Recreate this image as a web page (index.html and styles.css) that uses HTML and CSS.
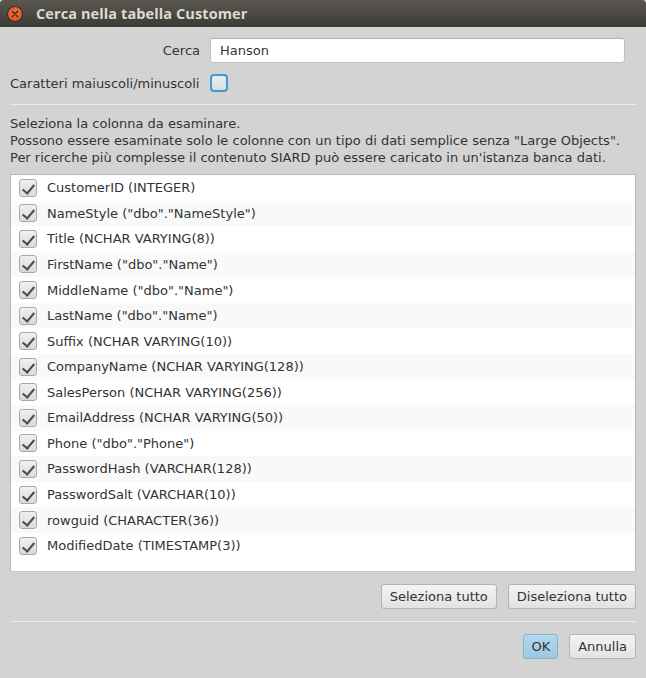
FILE: index.html
```html
<!DOCTYPE html>
<html lang="it">
<head>
<meta charset="utf-8">
<title>Cerca nella tabella Customer</title>
<link rel="stylesheet" href="styles.css">
</head>
<body>
<div class="window">
  <div class="titlebar">
    <span class="close"><svg width="8" height="8" viewBox="0 0 8 8"><path d="M1.5 1.5 L6.5 6.5 M6.5 1.5 L1.5 6.5" stroke="#3a1a10" stroke-width="1.3" stroke-linecap="round"/></svg></span>
    <span class="title">Cerca nella tabella Customer</span>
  </div>
  <div class="content">
    <div class="form">
      <label class="form-label">Cerca</label>
      <div class="textfield">Hanson</div>
      <label class="form-label form-label-left">Caratteri maiuscoli/minuscoli</label>
      <div class="case-box"></div>
    </div>
    <div class="separator"></div>
    <p class="info">Seleziona la colonna da esaminare.<br>Possono essere esaminate solo le colonne con un tipo di dati semplice senza "Large Objects".<br>Per ricerche più complesse il contenuto SIARD può essere caricato in un'istanza banca dati.</p>
    <div class="list">
      <div class="row"><span class="check"></span><span>CustomerID (INTEGER)</span></div>
      <div class="row"><span class="check"></span><span>NameStyle ("dbo"."NameStyle")</span></div>
      <div class="row"><span class="check"></span><span>Title (NCHAR VARYING(8))</span></div>
      <div class="row"><span class="check"></span><span>FirstName ("dbo"."Name")</span></div>
      <div class="row"><span class="check"></span><span>MiddleName ("dbo"."Name")</span></div>
      <div class="row"><span class="check"></span><span>LastName ("dbo"."Name")</span></div>
      <div class="row"><span class="check"></span><span>Suffix (NCHAR VARYING(10))</span></div>
      <div class="row"><span class="check"></span><span>CompanyName (NCHAR VARYING(128))</span></div>
      <div class="row"><span class="check"></span><span>SalesPerson (NCHAR VARYING(256))</span></div>
      <div class="row"><span class="check"></span><span>EmailAddress (NCHAR VARYING(50))</span></div>
      <div class="row"><span class="check"></span><span>Phone ("dbo"."Phone")</span></div>
      <div class="row"><span class="check"></span><span>PasswordHash (VARCHAR(128))</span></div>
      <div class="row"><span class="check"></span><span>PasswordSalt (VARCHAR(10))</span></div>
      <div class="row"><span class="check"></span><span>rowguid (CHARACTER(36))</span></div>
      <div class="row"><span class="check"></span><span>ModifiedDate (TIMESTAMP(3))</span></div>
    </div>
    <div class="buttons">
      <button class="btn">Seleziona tutto</button>
      <button class="btn">Diseleziona tutto</button>
    </div>
    <div class="separator"></div>
    <div class="buttons buttons-bottom">
      <button class="btn btn-default">OK</button>
      <button class="btn">Annulla</button>
    </div>
  </div>
</div>
</body>
</html>
```
FILE: styles.css
```css
* { box-sizing: border-box; }
html, body { margin: 0; padding: 0; }
body {
  width: 646px;
  height: 678px;
  background: #d3d3d3;
  font-family: "DejaVu Sans", "Liberation Sans", sans-serif;
  font-size: 13px;
  color: #333;
  overflow: hidden;
}
.window { width: 646px; height: 678px; display: flex; flex-direction: column; }
.titlebar {
  height: 27px;
  flex: none;
  background: linear-gradient(#5a5750, #3c3b37);
  border-radius: 4px 4px 0 0;
  display: flex;
  align-items: center;
  padding-left: 8px;
  gap: 14px;
}
.close {
  width: 14px; height: 14px;
  border-radius: 50%;
  background: radial-gradient(circle at 50% 40%, #f2703f, #d9481c);
  box-shadow: 0 0 0 1px #3a2a22;
  display: flex; align-items: center; justify-content: center;
}
.close svg { display: block; }
.title {
  font-family: "Open Sans", "Noto Sans", sans-serif;
  font-weight: 700;
  font-size: 14.5px;
  color: #dfdbd2;
  letter-spacing: 0.1px;
}
.content { padding: 11px 10px 0 10px; display: flex; flex-direction: column; }
.form {
  display: grid;
  grid-template-columns: 190px 1fr;
  column-gap: 10px;
  row-gap: 11px;
  align-items: center;
  margin-right: 11px;
}
.form-label { text-align: right; }
.form-label-left { text-align: left; }
.textfield {
  height: 25px;
  background: #fff;
  border: 1px solid #c2c2c2;
  border-top-color: #b0b0b0;
  border-radius: 3px;
  padding-left: 9px;
  display: flex; align-items: center;
  color: #333;
}
.case-box {
  width: 18px; height: 18px;
  border: 2px solid #3b9bd6;
  border-radius: 4px;
  background: linear-gradient(#ececec, #dcdcdc);
}
.separator { height: 1px; background: #ececec; margin-top: 12px; }
.info { margin: 10px 0 0 0; line-height: 17px; }
.list {
  margin-top: 8px;
  height: 398px;
  background: #fff;
  border: 1px solid #b8b8b8;
  border-bottom-color: #c8c8c8;
  display: flex; flex-direction: column;
}
.row {
  height: 25.57px;
  display: flex; align-items: center;
  padding-left: 8px;
  gap: 10px;
}
.row:nth-child(even) { background: #f9f9f9; }
.check {
  width: 18px; height: 18px;
  border: 1px solid #a9a9a9;
  border-radius: 3px;
  background: linear-gradient(#f0f0f0, #dadada);
  position: relative;
  flex: none;
}
.check::after {
  content: "";
  position: absolute;
  left: 5px; top: 2px;
  width: 5px; height: 10px;
  border: solid #4a4a4a;
  border-width: 0 2px 2px 0;
  transform: rotate(40deg);
}
.buttons {
  display: flex; justify-content: flex-end; gap: 11px;
  margin-top: 12px;
}
.buttons-bottom { margin-top: 12px; }
.btn {
  height: 25px;
  padding: 0 8px;
  font-family: "DejaVu Sans", "Liberation Sans", sans-serif;
  font-size: 13px;
  color: #333;
  background: linear-gradient(#f4f4f4, #e2e2e2);
  border: 1px solid #b3b3b3;
  border-radius: 3px;
}
.btn-default {
  padding: 0 7px;
  background: linear-gradient(#b4d7ec, #9cc8e2);
  border-color: #86b2cf;
}
```
